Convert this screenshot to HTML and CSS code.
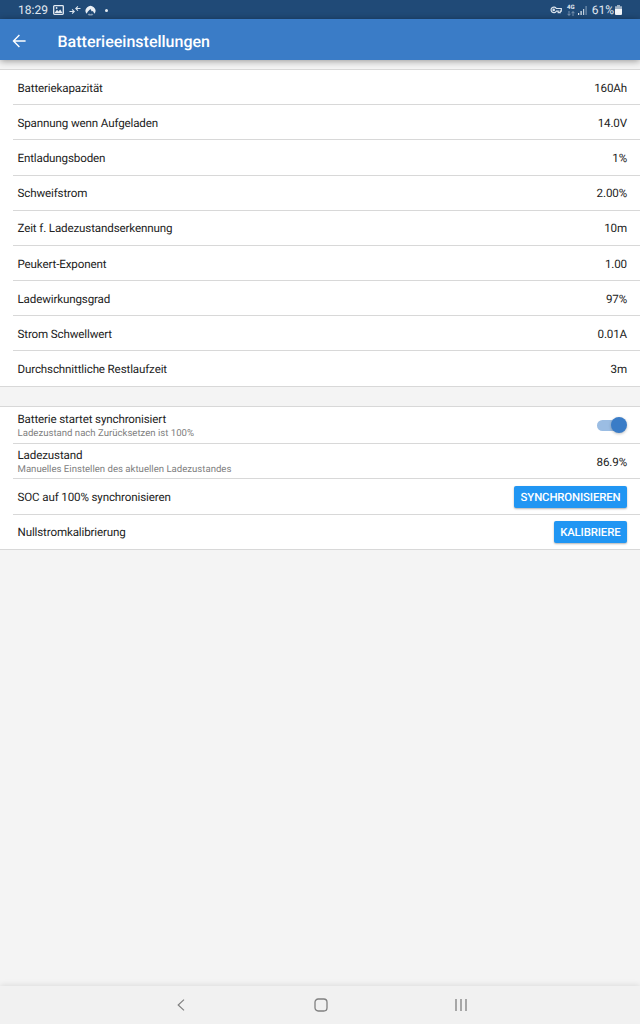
FILE: index.html
```html
<!DOCTYPE html>
<html lang="de">
<head>
    <meta charset="utf-8">
    <title>Batterieeinstellungen</title>
    <link rel="stylesheet" href="styles.css">
</head>
<body>
    <div class="status-bar">
        <div class="status-left">
            <span class="clock">18:29</span>
            <svg class="icon-picture" width="11" height="10" viewBox="0 0 11 10">
                <rect x="0.7" y="0.7" width="9.6" height="8.6" rx="0.8" fill="none" stroke="#e4ebf2" stroke-width="1.3"/>
                <path d="M1.5 8L4 4.8L5.5 6.5L7.2 4.6L9.5 8Z" fill="#e4ebf2"/>
                <circle cx="3.6" cy="3" r="0.9" fill="#e4ebf2"/>
            </svg>
            <svg class="icon-arrows" width="12" height="10" viewBox="0 0 12 10" fill="none" stroke="#dbe4ed" stroke-width="1.1">
                <path d="M0.5 6.5H5M3.1 4.4L5.2 6.5L3.1 8.6M11.5 3.5H7M8.9 1.4L6.8 3.5L8.9 5.6"/>
            </svg>
            <svg class="icon-app" width="11" height="11" viewBox="0 0 11 11">
                <path d="M1.6 8.8A4.9 4.9 0 1 1 9.4 8.8L7.9 6L6.8 6.4L5.4 4L2.9 6.4Z" fill="#e9eff5"/>
                <path d="M2.6 9.7L4 8.6L5.5 9.2L7 8.6L8.4 9.7Q5.5 11.4 2.6 9.7Z" fill="#8ba2bb"/>
            </svg>
            <span class="dot"></span>
        </div>
        <div class="status-right">
            <svg class="icon-key" width="12" height="8" viewBox="0 0 12 8" fill="none" stroke="#dbe4ed" stroke-width="1.2">
                <path d="M6.3 2.5H11.3V5.2H10.2V6.7H8.2V5.2H6.3A2.8 2.8 0 1 1 6.3 2.5Z"/>
                <circle cx="3.7" cy="3.9" r="0.7"/>
            </svg>
            <div class="network">
                <span>4G</span>
                <svg width="8" height="5" viewBox="0 0 8 5" fill="none" stroke="#8ea5be" stroke-width="0.8">
                    <path d="M2 0V4.4M0.5 2.8L2 4.4L3.5 2.8M6 5V0.6M4.5 2.2L6 0.6L7.5 2.2"/>
                </svg>
            </div>
            <svg class="icon-signal" width="9" height="9" viewBox="0 0 9 9">
                <path d="M0 7H1.2V9H0ZM2.5 5H3.7V9H2.5Z" fill="#e4ebf2"/>
                <path d="M5 3H6.2V9H5Z" fill="#c3d0de"/>
                <path d="M7.5 0H8.7V9H7.5Z" fill="#7893b0"/>
            </svg>
            <span class="percent">61%</span>
            <svg class="icon-battery" width="7" height="10" viewBox="0 0 7 10">
                <path d="M2 0H5V1.2H7V4H0V1.2H2Z" fill="#9db0c4"/>
                <path d="M0 4H7V9Q7 10 6 10H1Q0 10 0 9Z" fill="#f3f6f9"/>
            </svg>
        </div>
    </div>

    <header class="toolbar">
        <svg width="14" height="14" viewBox="0 0 14 14" fill="none" stroke="#fff" stroke-width="1.4">
            <path d="M13.6 7H1.8M7.4 1.1L1.5 7L7.4 12.9"/>
        </svg>
        <h1>Batterieeinstellungen</h1>
    </header>

    <main>
        <ul class="list">
            <li><span>Batteriekapazität</span><span class="value">160Ah</span></li>
            <li><span>Spannung wenn Aufgeladen</span><span class="value">14.0V</span></li>
            <li><span>Entladungsboden</span><span class="value">1%</span></li>
            <li><span>Schweifstrom</span><span class="value">2.00%</span></li>
            <li><span>Zeit f. Ladezustandserkennung</span><span class="value">10m</span></li>
            <li><span>Peukert-Exponent</span><span class="value">1.00</span></li>
            <li><span>Ladewirkungsgrad</span><span class="value">97%</span></li>
            <li><span>Strom Schwellwert</span><span class="value">0.01A</span></li>
            <li><span>Durchschnittliche Restlaufzeit</span><span class="value">3m</span></li>
        </ul>

        <ul class="list">
            <li class="row-toggle">
                <div class="label">
                    <span>Batterie startet synchronisiert</span>
                    <small>Ladezustand nach Zurücksetzen ist 100%</small>
                </div>
                <span class="toggle"><span class="knob"></span></span>
            </li>
            <li>
                <div class="label">
                    <span>Ladezustand</span>
                    <small>Manuelles Einstellen des aktuellen Ladezustandes</small>
                </div>
                <span class="value">86.9%</span>
            </li>
            <li><span>SOC auf 100% synchronisieren</span><button>SYNCHRONISIEREN</button></li>
            <li><span>Nullstromkalibrierung</span><button>KALIBRIERE</button></li>
        </ul>
    </main>

    <nav class="nav-bar">
        <svg width="8" height="12" viewBox="0 0 8 12" fill="none" stroke="#808080" stroke-width="1.2">
            <path d="M7 0.6L1.2 6L7 11.4"/>
        </svg>
        <svg class="home" width="14" height="14" viewBox="0 0 14 14" fill="none" stroke="#808080" stroke-width="1.3">
            <rect x="1" y="1" width="12" height="12" rx="3.2"/>
        </svg>
        <svg width="12" height="12" viewBox="0 0 12 12" fill="none" stroke="#808080" stroke-width="1.3">
            <path d="M1 0V12M6 0V12M11 0V12"/>
        </svg>
    </nav>
</body>
</html>
```

FILE: styles.css
```css
* {
    box-sizing: border-box;
}

body {
    margin: 0;
    height: 1024px;
    display: flex;
    flex-direction: column;
    overflow: hidden;
    font-family: Roboto, sans-serif;
    font-size: 11.6px;
    text-rendering: geometricPrecision;
    color: #222;
    background: #f4f4f4;
}

/* Android status bar */
.status-bar {
    height: 19px;
    flex-shrink: 0;
    display: flex;
    justify-content: space-between;
    padding: 1px 18px 0 18px;
    background: #204a77;
    color: #e4ebf2;
    font-size: 12px;
}

.status-left,
.status-right {
    display: flex;
    align-items: center;
}

.clock {
    width: 30px;
    margin-right: 5px;
    white-space: nowrap;
}

.icon-arrows {
    margin-left: 5px;
}

.icon-app {
    margin-left: 4px;
}

.dot {
    width: 3px;
    height: 3px;
    margin-left: 8.5px;
    border-radius: 50%;
    background: #e4ebf2;
}

.network {
    display: flex;
    flex-direction: column;
    align-items: center;
    width: 8px;
    margin: 0 3px 0 5px;
    font-size: 6px;
    line-height: 6px;
    font-weight: bold;
}

.icon-signal {
    margin: 1px 5px 0 0;
}

.icon-battery {
    margin-left: 1px;
}

/* Header */
.toolbar {
    position: relative;
    height: 41px;
    flex-shrink: 0;
    display: flex;
    align-items: center;
    gap: 31.5px;
    padding: 3px 12px 0;
    background: #3a7cc7;
    box-shadow: 0 1px 7px rgba(0, 0, 0, 0.4);
}

h1 {
    margin: 0;
    font-size: 16px;
    font-weight: 500;
    color: #fff;
}

/* Settings lists */
main {
    flex: 1;
    padding-top: 9px;
}

.list {
    list-style: none;
    margin: 0 0 19.5px;
    padding: 0 0 0 13px;
    background: #fff;
    border-top: 1px solid #d8d8d8;
    border-bottom: 1px solid #d8d8d8;
    letter-spacing: -0.14px;
}

.list li {
    display: flex;
    align-items: center;
    justify-content: space-between;
    height: 35.17px;
    padding: 1px 13px 0 4.5px;
}

.list li:first-child {
    height: 34.3px;
}

.list li + li {
    border-top: 1px solid #d8d8d8;
}

.list .row-toggle:first-child {
    height: 36.2px;
    padding-top: 0;
}

.label {
    display: flex;
    flex-direction: column;
    gap: 2px;
    line-height: 14px;
}

.row-toggle .label {
    margin-top: 1px;
}

.label small {
    font-size: 9.6px;
    line-height: 12px;
    letter-spacing: 0;
    color: #808080;
}

.toggle {
    position: relative;
    width: 29px;
    height: 11px;
    margin-right: 1px;
    border-radius: 6px;
    background: #9bbde3;
}

.knob {
    position: absolute;
    right: -1px;
    top: -2.5px;
    width: 16px;
    height: 16px;
    border-radius: 50%;
    background: #3a7cc7;
    box-shadow: 0 1px 3px rgba(0, 0, 0, 0.25);
}

button {
    height: 22px;
    padding: 0 6.5px;
    border: none;
    border-radius: 2px;
    background: #2196f3;
    color: #fff;
    font-family: inherit;
    font-size: 11.4px;
    font-weight: 500;
    letter-spacing: -0.14px;
    text-rendering: inherit;
    box-shadow: 0 1px 2px rgba(0, 0, 0, 0.3);
}

/* Bottom navigation */
.nav-bar {
    height: 38px;
    flex-shrink: 0;
    display: flex;
    align-items: center;
    justify-content: space-between;
    padding: 0 173px 0 177px;
    background: #f1f1f1;
    box-shadow: 0 -1px 6px rgba(0, 0, 0, 0.1);
}

.home {
    margin-left: 2px;
}
```
